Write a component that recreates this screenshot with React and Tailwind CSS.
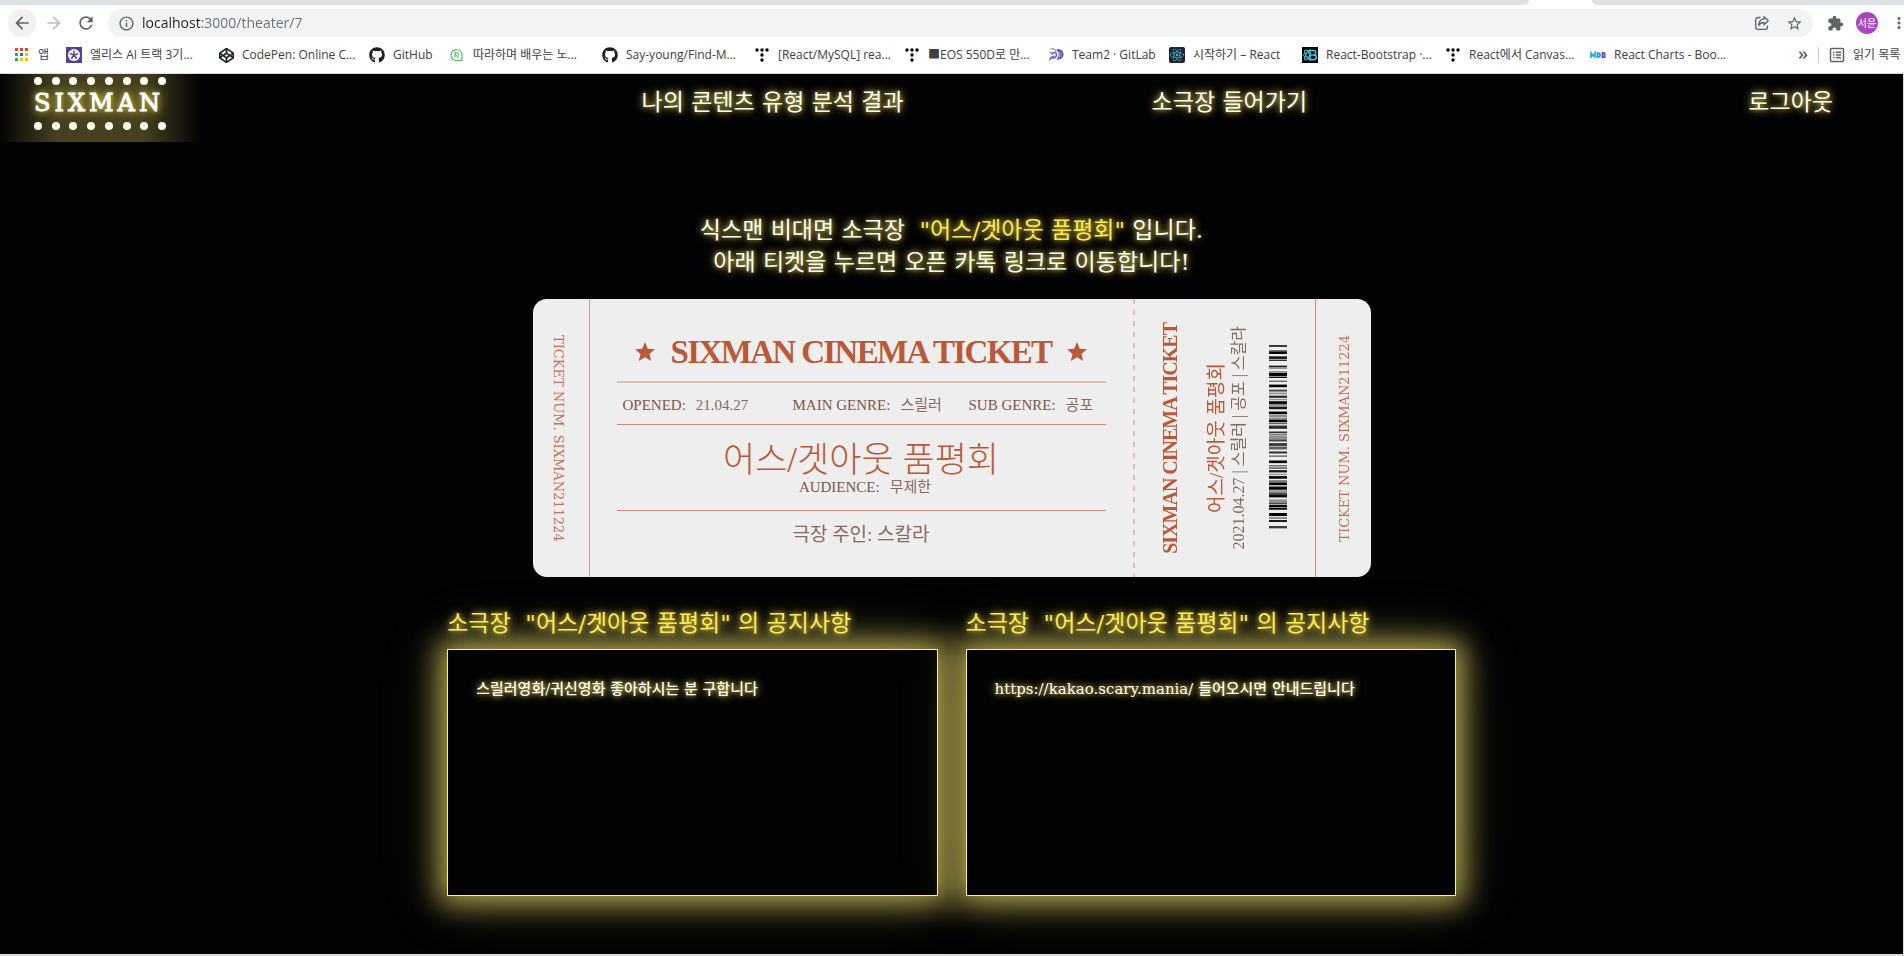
import {
  MdArrowBack,
  MdArrowForward,
  MdExtension,
  MdInfoOutline,
  MdMoreVert,
  MdRefresh,
  MdStar,
  MdStarBorder,
} from "react-icons/md";
import { FaCodepen, FaGithub, FaReact } from "react-icons/fa";

const movieTitle = "어스/겟아웃 품평회";

// [y, height, opacity]
const bars = [
  [3, 6, 0.75], [18, 3, 0.5], [22, 8, 1], [37, 8, 0.9], [47, 4, 0.8], [65, 5, 0.9], [71, 4, 0.4],
  [82, 4, 0.5], [87, 9, 1], [98, 4, 1], [110, 4, 0.6], [122, 8, 1], [137, 6, 0.7], [146, 5, 0.4],
  [155, 7, 0.8], [165, 4, 0.4], [172, 8, 1], [181, 4, 0.6], [188, 8, 0.9], [203, 8, 1], [213, 8, 0.4],
  [223, 3, 0.5], [227, 8, 1], [237, 4, 0.6], [245, 10, 0.8], [263, 5, 0.8], [270, 4, 0.5],
  [275, 12, 0.4], [287, 6, 0.7], [298, 8, 0.8], [308, 9, 0.6], [323, 6, 0.8], [335, 4, 0.6],
  [350, 8, 1], [364, 4, 0.6], [371, 4, 0.7], [379, 7, 0.9], [390, 4, 0.4], [397, 8, 1],
  [410, 4, 0.7], [416, 8, 1], [426, 4, 0.5], [430, 8, 1], [440, 4, 0.5], [446, 8, 0.7], [454, 7, 1],
  [467, 10, 0.4], [477, 5, 0.7], [484, 7, 1], [493, 5, 1], [508, 9, 1], [520, 6, 0.4], [529, 6, 0.9],
  [547, 7, 0.75],
];

function AppsIcon() {
  const colors = ["#ea4335", "#ea4335", "#ea4335", "#34a853", "#1a73e8", "#fbbc04", "#34a853", "#fbbc04", "#fbbc04"];
  return (
    <svg viewBox="0 0 16 16" className="size-4">
      {colors.map((c, i) => (
        <rect key={i} x={1 + (i % 3) * 5} y={1 + Math.floor(i / 3) * 5} width="3" height="3" fill={c} />
      ))}
    </svg>
  );
}

function EliceIcon() {
  return (
    <svg viewBox="0 0 16 16" className="size-4">
      <rect width="16" height="16" fill="#524394" />
      <circle cx="8" cy="8" r="6" fill="#fff" />
      <g stroke="#524394" strokeWidth="1.5">
        <path d="M8 8V3.5M8 8l4.2-1.4M8 8l2.7 3.7M8 8l-2.7 3.7M8 8L3.8 6.6" />
      </g>
    </svg>
  );
}

function InflearnIcon() {
  return (
    <svg viewBox="0 0 16 16" className="size-4" fill="none" stroke="#4fbf67">
      <path d="M13 13.5H8A5.5 5.5 0 1 1 13 8z" strokeWidth="1.2" />
      <path d="M6 10.5V6.5l3.5 4.5M6 5.5c2-.5 3.5.5 3.5 3" strokeWidth="1.1" />
    </svg>
  );
}

function TistoryIcon() {
  const dots = [[3, 3], [8, 3], [13, 3], [8, 8], [8, 13]];
  return (
    <svg viewBox="0 0 16 16" className="size-4" fill="#000">
      {dots.map(([x, y]) => (
        <circle key={`${x}-${y}`} cx={x} cy={y} r="1.7" />
      ))}
    </svg>
  );
}

function TeamIcon() {
  return (
    <svg viewBox="0 0 16 16" className="size-4" fill="none">
      <path d="M2.5 2C5 1.5 7.5 2.5 8.5 5M1 5.5h3.5" stroke="#a9a2d8" strokeWidth="1.5" />
      <path d="M1 14.5l1-4.5 4-1.5 1 2.5-3.5 1z" fill="#7a70bd" />
      <path d="M8.5 2.5c4.5-1 7 1.5 7 5s-3 5.5-7 5l2-3v-4z" fill="#5a4fa5" />
      <path d="M3.5 7.5c2-3 5-2.5 5 .5s-2 2.500-4 3" stroke="#6c62b3" strokeWidth="1.5" />
      <path d="M11.5 4.5v7M13.2 5v5" stroke="#d8d4f0" strokeWidth=".6" />
    </svg>
  );
}

function ReactTile() {
  return (
    <span className="flex size-4 items-center justify-center rounded-xs bg-[#20232a] text-[#3fb4d0]">
      <FaReact size={14} />
    </span>
  );
}

function BootstrapTile() {
  return (
    <svg viewBox="0 0 16 16" className="size-4" fill="none" stroke="#41c8e6">
      <rect width="16" height="16" fill="#000" stroke="none" />
      <ellipse cx="6" cy="8" rx="5.5" ry="2.2" transform="rotate(60 6 8)" />
      <ellipse cx="6" cy="8" rx="5.5" ry="2.2" transform="rotate(-60 6 8)" />
      <path d="M7 6C3 5.5 1 7 1 8s2 2.5 6 2" />
      <path d="M8 3.5h3.5a2.2 2.2 0 0 1 0 4.5H8zM8 8h4a2.3 2.3 0 0 1 0 4.6H8z" fill="#000" strokeWidth="1.6" />
    </svg>
  );
}

function MdbIcon() {
  return (
    <svg viewBox="0 0 16 16" className="size-4" fill="none" strokeWidth="1.7">
      <path d="M1 11V6l2 3 2-3v5" stroke="#29a8e0" />
      <path d="M7.5 6v4.2c3.5.3 3.5-4.5 0-4.2z" stroke="#2f8fdd" />
      <path d="M12.5 5.8v4.5h1.3c1.5 0 1.5-2.2 0-2.2 1.3 0 1.3-2.3 0-2.3z" stroke="#5b4cc4" />
    </svg>
  );
}

function ShareIcon() {
  return (
    <svg viewBox="0 0 16 16" className="size-4" fill="none" stroke="#5f6368" strokeWidth="1.3" strokeLinejoin="round">
      <path d="M6.5 2.5H4A2.3 2.3 0 0 0 1.7 4.8V12A2.3 2.3 0 0 0 4 14.3h7.2a2.3 2.3 0 0 0 2.3-2.3v-1.5" />
      <path d="M10 1.7l4.3 4-4.3 4V7.5C7.5 7.5 5.8 8.3 4.5 10.3 4.9 6.8 6.7 4.3 10 3.9z" />
    </svg>
  );
}

function ReadingListIcon() {
  return (
    <svg viewBox="0 0 16 16" className="size-4" fill="none" stroke="#5f6368" strokeWidth="1.5">
      <rect x="1.5" y="1.5" width="13" height="13" rx="1" />
      <path d="M4 5.2h1.5M4 8h1.5M4 10.8h1.5M7 5.2h5M7 8h5M7 10.8h5" />
    </svg>
  );
}

const bookmarks = [
  { label: "앱", icon: <AppsIcon />, width: "w-[52px]" },
  { label: "엘리스 AI 트랙 3기...", icon: <EliceIcon />, width: "w-[152px]" },
  { label: "CodePen: Online C...", icon: <FaCodepen size={15} stroke="currentColor" strokeWidth={14} />, width: "w-[151px]" },
  { label: "GitHub", icon: <FaGithub size={16} />, width: "w-[80px]" },
  { label: "따라하며 배우는 노...", icon: <InflearnIcon />, width: "w-[153px]" },
  { label: "Say-young/Find-M...", icon: <FaGithub size={16} />, width: "w-[152px]" },
  { label: "[React/MySQL] rea...", icon: <TistoryIcon />, width: "w-[150px]" },
  { label: "■EOS 550D로 만...", icon: <TistoryIcon />, width: "w-[144px]" },
  { label: "Team2 · GitLab", icon: <TeamIcon />, width: "w-[121px]" },
  { label: "시작하기 – React", icon: <ReactTile />, width: "w-[133px]" },
  { label: "React-Bootstrap ·...", icon: <BootstrapTile />, width: "w-[143px]" },
  { label: "React에서 Canvas...", icon: <TistoryIcon />, width: "w-[145px]" },
  { label: "React Charts - Boo...", icon: <MdbIcon />, width: "w-[145px]" },
];

function BrowserBar() {
  return (
    <div className="border-b border-[#dadce0] bg-white font-['Open_Sans','Noto_Sans_CJK_KR',sans-serif] text-[#3c4043]">
      <div className="flex h-[5px]">
        <div className="flex-1 rounded-br-md bg-[#dee1e6]" />
        <div className="w-[63px]" />
        <div className="w-[312px] rounded-bl-md bg-[#dee1e6]" />
      </div>
      <div className="flex items-center pt-1 text-[#5f6368]">
        <div className="flex gap-1 pl-2">
          <button aria-label="뒤로" className="flex size-7 items-center justify-center rounded-full bg-[#f1f1f1]">
            <MdArrowBack size={20} />
          </button>
          <button aria-label="앞으로" className="flex size-7 items-center justify-center text-[#babcbe]">
            <MdArrowForward size={20} />
          </button>
          <button aria-label="새로고침" className="flex size-7 items-center justify-center">
            <MdRefresh size={20} />
          </button>
        </div>
        <div className="ml-2 flex h-7 flex-1 items-center rounded-full bg-[#f1f3f4] px-2.5">
          <MdInfoOutline size={17} />
          <input
            aria-label="주소창"
            defaultValue="localhost:3000/theater/7"
            className="ml-[7px] flex-1 bg-[linear-gradient(90deg,#202124_60px,#6b6f73_60px)] bg-clip-text text-sm text-transparent outline-none"
          />
          <button aria-label="공유">
            <ShareIcon />
          </button>
          <button aria-label="북마크" className="ml-4">
            <MdStarBorder size={17} />
          </button>
        </div>
        <button aria-label="확장 프로그램" className="ml-3.5">
          <MdExtension size={17} />
        </button>
        <button className="ml-3 size-[22px] rounded-full bg-[#ab47bc] text-[10px] leading-[22px] text-white">서윤</button>
        <button aria-label="메뉴" className="-mr-1 ml-3">
          <MdMoreVert size={18} />
        </button>
      </div>
      <div className="flex h-9 items-center overflow-hidden pl-3.5 text-xs whitespace-nowrap">
        {bookmarks.map(({ label, icon, width }, i) => (
          <a key={i} href="#" className={`flex shrink-0 items-center gap-2 ${width}`}>
            <span className="flex size-4 shrink-0 items-center justify-center text-[#1b1f23]">{icon}</span>
            {label}
          </a>
        ))}
        <button aria-label="북마크 더보기" className="ml-auto shrink-0 pb-1 text-lg leading-4 font-semibold text-[#5f6368]">
          »
        </button>
        <a href="#" className="ml-2.5 flex h-4 w-[86px] shrink-0 items-center gap-2 overflow-hidden border-l border-[#c8cacd] pl-2.5">
          <span className="shrink-0">
            <ReadingListIcon />
          </span>
          읽기 목록
        </a>
      </div>
    </div>
  );
}

function DotRow() {
  return (
    <div className="flex justify-between">
      {Array.from({ length: 8 }, (_, i) => (
        <span key={i} className="size-2 rounded-full bg-[#fffdf2]" />
      ))}
    </div>
  );
}

function Header() {
  return (
    <header className="grid grid-cols-[28.6%_24%_24%_1fr] text-center text-[23px] leading-[56px] text-white [text-shadow:0_0_4px_#f5de5080,0_0_9px_#f5de50]">
      <a
        href="#"
        className="h-[68px] w-[200px] overflow-hidden bg-[linear-gradient(90deg,transparent,#464020_28%,#464020_72%,transparent)] px-[34px] pt-[3px]"
      >
        <DotRow />
        <span className="block text-left text-2xl leading-[37px] tracking-[4px] text-white [-webkit-text-stroke:1px_#fff] [text-shadow:0_0_2px_#8a8a8a,0_0_6px_#e6d840,0_0_12px_#e6d840]">
          SIXMAN
        </span>
        <DotRow />
      </a>
      <a href="#">나의 콘텐츠 유형 분석 결과</a>
      <a href="#">소극장 들어가기</a>
      <a href="#" className="pr-[70px] text-right">
        로그아웃
      </a>
    </header>
  );
}

function TicketNumber({ flipped }) {
  return (
    <span
      className={`font-['DejaVu_Serif',serif] text-[13px] whitespace-nowrap text-[#c4714f] [writing-mode:vertical-rl] ${flipped ? "rotate-180" : ""}`}
    >
      TICKET NUM. SIXMAN211224
    </span>
  );
}

function Info({ label, value }) {
  return (
    <div className="flex items-baseline gap-2.5">
      <dt className="text-[15px] text-[#7d574c]">{label}:</dt>
      <dd className="text-[15px] text-[#8a6a60]">{value}</dd>
    </div>
  );
}

function Barcode() {
  return (
    <svg viewBox="0 0 54 556" preserveAspectRatio="none" className="h-[185px] w-[18px]">
      {bars.map(([y, h, opacity]) => (
        <rect key={y} y={y} width="54" height={h} opacity={opacity} />
      ))}
    </svg>
  );
}

function Ticket() {
  return (
    <a
      href="#"
      className="mt-[21px] flex h-[278px] w-[44%] min-w-[838px] overflow-hidden rounded-[14px] bg-[#eeeeee] font-['Liberation_Serif','Noto_Sans_CJK_KR',serif] text-[#b85a38]"
    >
      <div className="flex w-[57px] items-center justify-center border-r border-[#d59a86] pr-1">
        <TicketNumber />
      </div>
      <div className="flex flex-1 flex-col items-center px-[27px] pt-[30px]">
        <h2 className="flex items-center gap-3.5 text-[33px] leading-[46px] font-bold tracking-tighter whitespace-nowrap">
          <MdStar size={24} />
          SIXMAN CINEMA TICKET
          <MdStar size={24} />
        </h2>
        <dl className="mt-1.5 grid h-[44px] w-full grid-cols-[170px_176px_auto] items-center border-t-2 border-b border-t-[#dfbfb4] border-b-[#cf8a74] pt-1 pl-1.5 whitespace-nowrap">
          <Info label="OPENED" value="21.04.27" />
          <Info label="MAIN GENRE" value="스릴러" />
          <Info label="SUB GENRE" value="공포" />
        </dl>
        <h3 className="mt-[18px] text-[35px] leading-[36px] font-light">{movieTitle}</h3>
        <dl className="flex h-8 w-full justify-center border-b border-[#cf8a74] pl-2 leading-4">
          <Info label="AUDIENCE" value="무제한" />
        </dl>
        <p className="mt-2.5 text-[19px] leading-[28px] text-[#8a6a60]">극장 주인: 스칼라</p>
      </div>
      <div className="w-0.5 bg-[repeating-linear-gradient(180deg,#dfbfb4_0_5px,transparent_5px_11px)]" />
      <div className="flex w-[180px] items-center pl-6 whitespace-nowrap [text-orientation:sideways]">
        <span className="rotate-180 text-[20px] leading-[22px] font-bold tracking-tighter [writing-mode:vertical-rl]">
          SIXMAN CINEMA TICKET
        </span>
        <span className="ml-6 rotate-180 text-[19px] leading-[24px] [writing-mode:vertical-rl]">{movieTitle}</span>
        <span className="rotate-180 text-base leading-[20px] text-[#8a6a60] [writing-mode:vertical-rl]">
          2021.04.27 | 스릴러 | 공포 | 스칼라
        </span>
        <div className="ml-5 pb-1">
          <Barcode />
        </div>
      </div>
      <div className="flex w-[56px] items-center justify-center border-l border-[#cf8a74] pl-1">
        <TicketNumber flipped />
      </div>
    </a>
  );
}

function Notice({ children }) {
  return (
    <section className="flex-1">
      <h2 className="text-[23px] leading-[34px] whitespace-pre text-[#ffea54] [text-shadow:0_0_4px_#f5de5080,0_0_9px_#f5de50]">
        {`소극장  "${movieTitle}" 의 공지사항`}
      </h2>
      <p className="mt-[9px] h-[247px] border border-[#fff07a] bg-[#020204] px-7 py-[27px] text-[15px] leading-6 font-medium text-white shadow-[0_0_26px_8px_#f5e66da6,0_0_60px_#f5e66d40] [text-shadow:0_0_4px_#f5de5080,0_0_9px_#f5de50]">
        {children}
      </p>
    </section>
  );
}

export default function App() {
  return (
    <div className="flex min-h-screen flex-col bg-[#dcdcdc]">
      <BrowserBar />
      <div className="mr-px mb-0.5 flex-1 bg-[#020204] font-['DejaVu_Serif','Noto_Sans_CJK_KR',serif]">
        <Header />
        <main className="flex flex-col items-center pt-[72px]">
          <h1 className="text-center text-[23px] leading-8 whitespace-pre text-white [text-shadow:0_0_4px_#f5de5080,0_0_9px_#f5de50]">
            식스맨 비대면 소극장 <span className="text-[#ffea54]">{` "${movieTitle}"`}</span> 입니다.
            <br />
            아래 티켓을 누르면 오픈 카톡 링크로 이동합니다!
          </h1>
          <Ticket />
          <div className="mt-[29px] flex w-[53%] gap-7">
            <Notice>스릴러영화/귀신영화 좋아하시는 분 구합니다</Notice>
            <Notice>https://kakao.scary.mania/ 들어오시면 안내드립니다</Notice>
          </div>
        </main>
      </div>
    </div>
  );
}
